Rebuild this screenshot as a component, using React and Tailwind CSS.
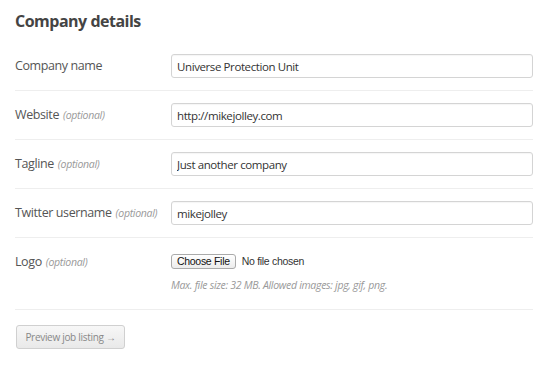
const fields = [
  { label: 'Company name', optional: false, value: 'Universe Protection Unit' },
  { label: 'Website', optional: true, value: 'http://mikejolley.com' },
  { label: 'Tagline', optional: true, value: 'Just another company' },
  { label: 'Twitter username', optional: true, value: 'mikejolley' },
]

function Label({ text, optional }) {
  return (
    <div className="w-[156px] shrink-0 pt-[4px] whitespace-nowrap text-[12.5px] leading-[16px] tracking-[-0.4px] text-[#555]">
      {text}
      {optional && <em className="ml-[4px] text-[10.5px] tracking-[-0.3px] text-[#999]">(optional)</em>}
    </div>
  )
}

export default function App() {
  return (
    <div className="w-[560px] h-[365px] bg-white pl-[15px] pr-[27px] font-['Open_Sans',sans-serif]">
      <h2 className="pt-[10px] pb-[10px] text-[16px] leading-[22px] tracking-[-0.5px] font-bold text-[#444]">Company details</h2>

      {fields.map(f => (
        <div key={f.label} className="flex py-[12px] border-b border-[#eeeeee]">
          <Label text={f.label} optional={f.optional} />
          <input
            readOnly
            value={f.value}
            className="flex-1 h-[24px] px-[5px] rounded-[3px] border border-[#d4d4d4] shadow-[inset_0_1px_1px_rgba(0,0,0,0.04)] text-[11.5px] tracking-[-0.4px] text-[#333] outline-none font-['Open_Sans',sans-serif]"
          />
        </div>
      ))}

      <div className="flex pt-[12px] pb-[17px] border-b border-[#eeeeee]">
        <Label text="Logo" optional />
        <div className="flex-1">
          <div className="flex items-center gap-[6px] pt-[4px]">
            <button className="h-[15px] px-[5px] rounded-[3px] border border-[#aaa] bg-gradient-to-b from-white to-[#ececec] text-[10.5px] leading-[13px] tracking-[-0.3px] text-[#111] font-['Liberation_Sans',sans-serif]">
              Choose File
            </button>
            <span className="text-[10.5px] tracking-[-0.3px] text-[#333] font-['Liberation_Sans',sans-serif]">No file chosen</span>
          </div>
          <p className="mt-[8px] text-[10.5px] leading-[14px] tracking-[-0.3px] italic text-[#999]">
            Max. file size: 32 MB. Allowed images: jpg, gif, png.
          </p>
        </div>
      </div>

      <div className="pt-[13px] pl-px">
        <button className="w-[109px] h-[24px] rounded-[3px] border border-[#d0d0d0] bg-gradient-to-b from-[#f7f7f7] to-[#e9e9e9] text-[10px] tracking-[-0.3px] text-[#888]">
          Preview job listing →
        </button>
      </div>
    </div>
  )
}
